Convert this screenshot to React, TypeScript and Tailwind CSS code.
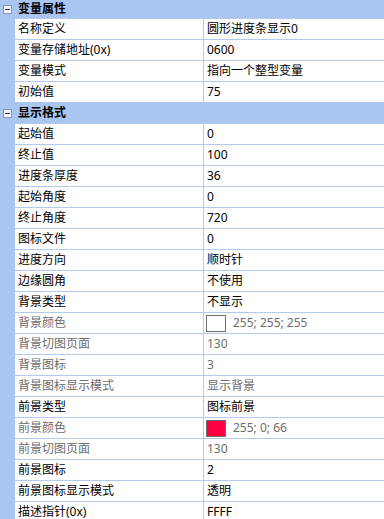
import React from "react";

type Row = { name: string; value: string; disabled?: boolean; color?: string };

const group1: Row[] = [
  { name: "名称定义", value: "圆形进度条显示0" },
  { name: "变量存储地址(0x)", value: "0600" },
  { name: "变量模式", value: "指向一个整型变量" },
  { name: "初始值", value: "75" },
];

const group2: Row[] = [
  { name: "起始值", value: "0" },
  { name: "终止值", value: "100" },
  { name: "进度条厚度", value: "36" },
  { name: "起始角度", value: "0" },
  { name: "终止角度", value: "720" },
  { name: "图标文件", value: "0" },
  { name: "进度方向", value: "顺时针" },
  { name: "边缘圆角", value: "不使用" },
  { name: "背景类型", value: "不显示" },
  { name: "背景颜色", value: "255; 255; 255", disabled: true, color: "#ffffff" },
  { name: "背景切图页面", value: "130", disabled: true },
  { name: "背景图标", value: "3", disabled: true },
  { name: "背景图标显示模式", value: "显示背景", disabled: true },
  { name: "前景类型", value: "图标前景" },
  { name: "前景颜色", value: "255; 0; 66", disabled: true, color: "#ff0042" },
  { name: "前景切图页面", value: "130", disabled: true },
  { name: "前景图标", value: "2" },
  { name: "前景图标显示模式", value: "透明" },
  { name: "描述指针(0x)", value: "FFFF" },
];

function Minus() {
  return (
    <div className="w-[15px] flex items-center justify-center">
      <div className="w-[9px] h-[9px] border border-[#8a96a8] bg-[#f4f6fa] flex items-center justify-center">
        <div className="w-[5px] h-px bg-[#333]" />
      </div>
    </div>
  );
}

function Header({ title, first }: { title: string; first?: boolean }) {
  return (
    <div
      className={
        "flex items-center bg-[#a9c6f0] " +
        (first ? "h-[18px]" : "h-[21px] border-t border-[#a9c6f0]")
      }
    >
      <Minus />
      <span className="pl-[3px] font-bold text-[12px] text-black leading-none">{title}</span>
    </div>
  );
}

function DataRow({ row }: { row: Row }) {
  const tc = row.disabled ? "text-[#6d6d6d]" : "text-black";
  return (
    <div className="flex h-[21px] bg-[#a9c6f0]">
      <div className="w-[15px] shrink-0" />
      <div className="flex-1 flex bg-white border-t border-[#b3c9ee]">
        <div className={"w-[188px] shrink-0 flex items-center pl-[3px] text-[12px] leading-none " + tc}>
          {row.name}
        </div>
        <div className="w-px bg-[#b3c9ee]" />
        <div className={"flex-1 flex items-center pl-[2px] text-[12px] leading-none " + tc}>
          {row.color && (
            <div
              className="w-[20px] h-[17px] border border-[#707070] mr-[7px]"
              style={{ backgroundColor: row.color }}
            />
          )}
          <span className={row.color ? "" : "pl-px"}>{row.value}</span>
        </div>
      </div>
    </div>
  );
}

export default function App() {
  return (
    <div
      className="w-[384px] h-[519px] overflow-hidden bg-white"
      style={{ fontFamily: '"Noto Sans", "Noto Sans CJK SC", sans-serif' }}
    >
      <Header title="变量属性" first />
      {group1.map((r) => (
        <DataRow key={r.name} row={r} />
      ))}
      <Header title="显示格式" />
      {group2.map((r) => (
        <DataRow key={r.name} row={r} />
      ))}
    </div>
  );
}
